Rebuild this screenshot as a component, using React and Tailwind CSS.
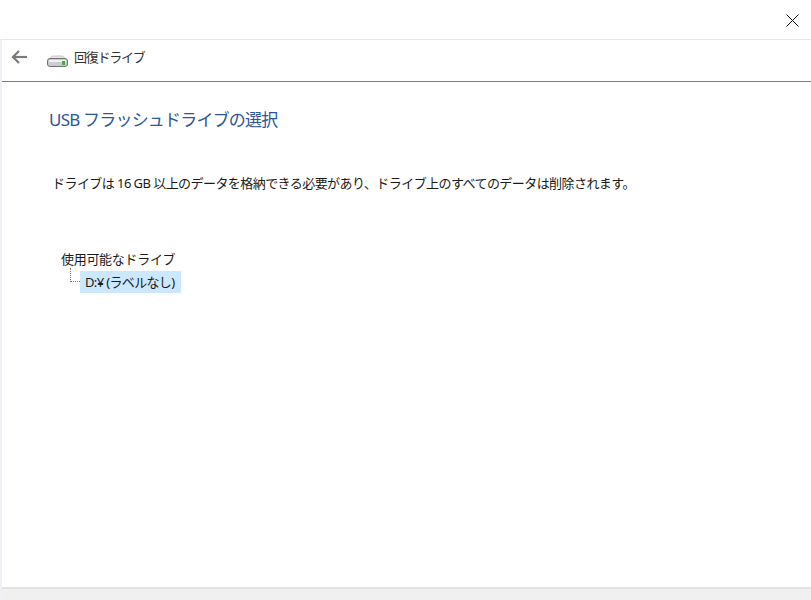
const font = { fontFamily: '"Noto Sans", "Noto Sans CJK JP", sans-serif' };

function Arrow() {
  return (
    <svg width="16" height="14" viewBox="0 0 16 14" fill="none" stroke="#7a7a7a" strokeWidth="2.2">
      <path d="M16 7H2" />
      <path d="M8 1L2 7l6 6" />
    </svg>
  );
}

function DriveIcon() {
  return (
    <svg width="21" height="12" viewBox="0 0 21 12">
      <path d="M3 3.5C4 1.5 5 1 7 1h7c2 0 3 .5 4 2.5z" fill="#e6e6e6" stroke="#b5b5b5" strokeWidth="0.7" />
      <rect x="0.5" y="3.5" width="20" height="8" rx="2.5" fill="#c9cdd0" stroke="#6f7376" />
      <rect x="2" y="5" width="17" height="2" fill="#eef0f1" />
      <rect x="15" y="6" width="3" height="4" fill="#4fa83a" />
    </svg>
  );
}

export default function App() {
  return (
    <div className="w-[811px] h-[600px] bg-white flex flex-col overflow-hidden text-[#1a1a1a]" style={font}>
      <div className="h-[39px] shrink-0 flex justify-end items-start pt-[14px] pr-[12px]">
        <svg width="13" height="13" viewBox="0 0 13 13" stroke="#111" strokeWidth="1" fill="none">
          <path d="M.5.5l12 12M12.5.5l-12 12" />
        </svg>
      </div>
      <div className="flex-1 flex flex-col border-l-2 border-[#eef2f6] min-h-0">
        <div className="h-[43px] shrink-0 border-t border-[#e8e8e8] border-b border-b-[#7d7d7d] flex items-center pl-[9px] pb-[7px]">
          <Arrow />
          <div className="ml-[20px] mt-[7px] flex"><DriveIcon /></div>
          <span className="ml-[6px] text-[13px] leading-[20px] tracking-[-1.25px] text-[#333]">回復ドライブ</span>
        </div>
        <div className="flex-1 min-h-0">
          <h1 className="ml-[47px] mt-[24px] text-[17px] leading-[28px] font-normal tracking-[-0.8px] text-[#2b579a]">USB フラッシュドライブの選択</h1>
          <p className="ml-[50px] mt-[39px] text-[13px] leading-[20px] tracking-[-0.56px]">ドライブは 16 GB 以上のデータを格納できる必要があり、ドライブ上のすべてのデータは削除されます。</p>
          <div className="ml-[59px] mt-[56px] text-[13px] leading-[20px] tracking-[-0.3px]">使用可能なドライブ</div>
          <div className="ml-[68px] flex items-start h-[24px]">
            <div className="w-[10px] h-[14px] mt-[-1px] border-l border-b border-dotted border-[#777]" />
            <div className="h-[22px] mt-[2px] bg-[#cce8ff] pl-[5px] pr-[7px] text-[13px] leading-[22px] tracking-[-0.65px]">D:¥ (ラベルなし)</div>
          </div>
        </div>
        <div className="h-[13px] shrink-0 bg-[#f0f0f0] border-t-2 border-[#e2e2e2]" />
      </div>
    </div>
  );
}
